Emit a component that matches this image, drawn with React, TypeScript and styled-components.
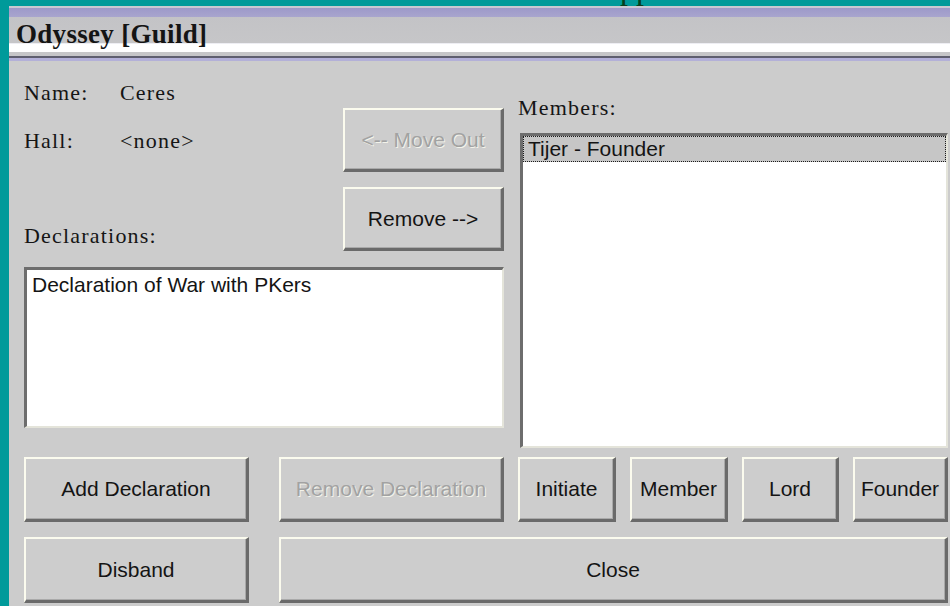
import React from 'react';
import styled, { createGlobalStyle } from 'styled-components';

const GlobalStyle = createGlobalStyle`
  html, body {
    margin: 0;
    padding: 0;
    background: #009a9a;
  }
  #root {
    width: 950px;
    height: 606px;
    overflow: hidden;
  }
`;

const Desktop = styled.div`
  width: 950px;
  height: 606px;
  overflow: hidden;
  background: #009a9a;
`;

const AppStrip = styled.div`
  height: 6px;
  overflow: hidden;
  padding-left: 597px;
`;

const AppTitle = styled.div`
  margin-top: -28px;
  font-family: 'Liberation Serif', serif;
  font-size: 32px;
  line-height: 32px;
  color: #07401c;
  white-space: nowrap;
`;

const Window = styled.div`
  margin-left: 9px;
  width: 960px;
  height: 600px;
  display: flex;
  flex-direction: column;
  background: #cccccc;
`;

const TitleBar = styled.div`
  height: 55px;
  box-sizing: border-box;
  padding: 13px 0 0 7px;
  background: linear-gradient(
    to bottom,
    #c9c9d2 0px,
    #c9c9d2 2px,
    #9d99c9 2px,
    #a8a5ce 11px,
    #c3c3c6 11px,
    #c6c6c8 37px,
    #dcdce6 37px,
    #ffffff 38px,
    #ffffff 46px,
    #c6c6c8 46px,
    #c6c6c8 50px,
    #5e5e6e 50px,
    #5e5e6e 52px,
    #b3b0d8 52px,
    #b3b0d8 55px
  );
`;

const TitleText = styled.div`
  font-family: 'Liberation Serif', serif;
  font-weight: bold;
  font-size: 27px;
  line-height: 30px;
  letter-spacing: 0.3px;
  color: #141414;
`;

const Body = styled.div`
  padding: 0 15px;
  display: flex;
  flex-direction: column;
`;

const TopArea = styled.div`
  display: grid;
  grid-template-columns: 480px 430px;
  column-gap: 14px;
  align-items: start;
`;

const LeftColumn = styled.div`
  display: flex;
  flex-direction: column;
`;

const InfoArea = styled.div`
  height: 191px;
  display: grid;
  grid-template-columns: 1fr 161px;
`;

const LabelColumn = styled.div`
  display: flex;
  flex-direction: column;
  padding: 19px 0 3px;
`;

const FieldRow = styled.div<{ $gap?: number }>`
  display: flex;
  margin-top: ${(p) => p.$gap ?? 0}px;
`;

const Label = styled.div<{ $width?: number }>`
  width: ${(p) => (p.$width ? `${p.$width}px` : 'auto')};
  font-family: 'Liberation Serif', serif;
  font-size: 22px;
  line-height: 26px;
  letter-spacing: 1.2px;
  color: #151515;
  white-space: nowrap;
`;

const SectionLabel = styled(Label)`
  margin-top: auto;
`;

const MoveColumn = styled.div`
  display: flex;
  flex-direction: column;
  gap: 15px;
  padding-top: 47px;
`;

const Button = styled.div<{ $disabled?: boolean; $width?: number }>`
  box-sizing: border-box;
  height: 100%;
  width: ${(p) => (p.$width ? `${p.$width}px` : '100%')};
  display: flex;
  align-items: center;
  justify-content: center;
  background: #cdcdcd;
  border-style: solid;
  border-width: 2px 3px 3px 2px;
  border-color: #fbfbee #6a6a6a #6a6a6a #fbfbee;
  box-shadow: inset -1px -1px 0 #a9a9a9;
  font-family: 'Liberation Sans', sans-serif;
  font-size: 21px;
  color: ${(p) => (p.$disabled ? '#a2a2a2' : '#141414')};
  text-shadow: ${(p) => (p.$disabled ? '1px 1px 0 #f3f3ea' : 'none')};
  white-space: nowrap;
`;

const MoveButton = styled(Button)`
  height: 64px;
`;

const ListBox = styled.div<{ $height: number }>`
  box-sizing: border-box;
  height: ${(p) => p.$height}px;
  background: #ffffff;
  border-style: solid;
  border-width: 3px 2px 2px 3px;
  border-color: #6d6d6d #e4e4da #e4e4da #6d6d6d;
  font-family: 'Liberation Sans', sans-serif;
  font-size: 21px;
  line-height: 24px;
  color: #141414;
`;

const DeclarationList = styled(ListBox)`
  margin-top: 15px;
  padding: 3px 5px;
`;

const RightColumn = styled.div`
  display: flex;
  flex-direction: column;
  padding-top: 34px;
`;

const MemberList = styled(ListBox)`
  margin: 12px 0 0 2px;
`;

const MemberRow = styled.div<{ $selected?: boolean }>`
  height: 26px;
  box-sizing: border-box;
  padding: 0 4px;
  border: 1px dotted ${(p) => (p.$selected ? '#1c1c1c' : 'transparent')};
  background: ${(p) => (p.$selected ? '#c6c6c6' : 'transparent')};
  white-space: nowrap;
`;

const Footer = styled.div`
  margin-top: 9px;
  display: grid;
  grid-template-columns: 255px 239px 430px;
  grid-template-rows: 65px 66px;
  row-gap: 15px;
`;

const RoleGroup = styled.div`
  display: grid;
  grid-template-columns: 98px 98px 97px 95px;
  column-gap: 14px;
`;

const CloseCell = styled.div`
  grid-column: 2 / 4;
`;

const members = [{ name: 'Tijer', rank: 'Founder' }];
const declarations = ['Declaration of War with PKers'];
const ranks = ['Initiate', 'Member', 'Lord', 'Founder'];

export default function App() {
  return (
    <>
      <GlobalStyle />
      <Desktop>
        <AppStrip>
          <AppTitle>Application</AppTitle>
        </AppStrip>
        <Window>
          <TitleBar>
            <TitleText>Odyssey [Guild]</TitleText>
          </TitleBar>
          <Body>
            <TopArea>
              <LeftColumn>
                <InfoArea>
                  <LabelColumn>
                    <FieldRow>
                      <Label $width={96}>Name:</Label>
                      <Label>Ceres</Label>
                    </FieldRow>
                    <FieldRow $gap={22}>
                      <Label $width={96}>Hall:</Label>
                      <Label>&lt;none&gt;</Label>
                    </FieldRow>
                    <SectionLabel>Declarations:</SectionLabel>
                  </LabelColumn>
                  <MoveColumn>
                    <MoveButton $disabled>&lt;-- Move Out</MoveButton>
                    <MoveButton>Remove --&gt;</MoveButton>
                  </MoveColumn>
                </InfoArea>
                <DeclarationList $height={161}>
                  {declarations.map((d) => (
                    <div key={d}>{d}</div>
                  ))}
                </DeclarationList>
              </LeftColumn>
              <RightColumn>
                <Label>Members:</Label>
                <MemberList $height={315}>
                  {members.map((m, i) => (
                    <MemberRow key={m.name} $selected={i === 0}>
                      {m.name} - {m.rank}
                    </MemberRow>
                  ))}
                </MemberList>
              </RightColumn>
            </TopArea>
            <Footer>
              <Button $width={225}>Add Declaration</Button>
              <Button $width={225} $disabled>
                Remove Declaration
              </Button>
              <RoleGroup>
                {ranks.map((r) => (
                  <Button key={r}>{r}</Button>
                ))}
              </RoleGroup>
              <Button $width={225}>Disband</Button>
              <CloseCell>
                <Button>Close</Button>
              </CloseCell>
            </Footer>
          </Body>
        </Window>
      </Desktop>
    </>
  );
}
